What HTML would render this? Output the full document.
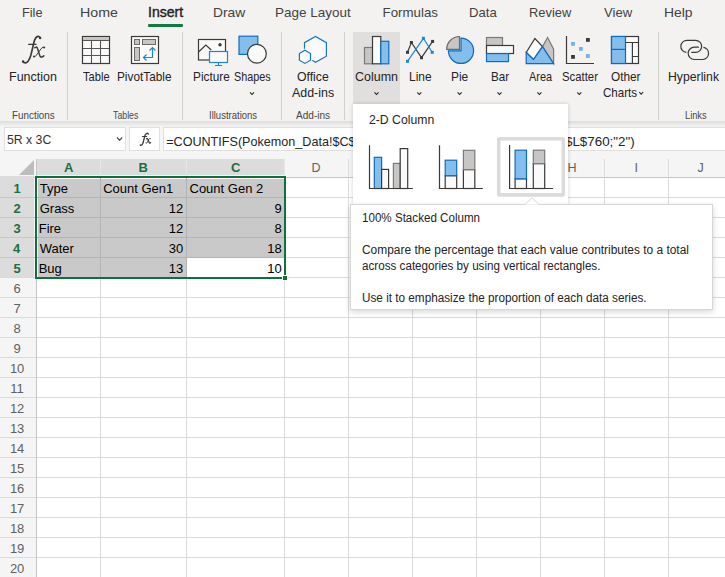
<!DOCTYPE html>
<html><head><meta charset="utf-8">
<style>
html,body{margin:0;padding:0;}
body{width:725px;height:577px;overflow:hidden;position:relative;background:#fff;font-family:"Liberation Sans",sans-serif;}
.a{position:absolute;}
.t{position:absolute;white-space:pre;transform-origin:0 0;}
svg{position:absolute;overflow:visible;}
</style></head><body>
<!-- ribbon background -->
<div class="a" style="left:0;top:0;width:725px;height:122px;background:#f3f2f1"></div>
<div class="a" style="left:148px;top:24px;width:35px;height:3px;background:#107c41;border-radius:1px"></div>
<div class="a" style="left:67px;top:32px;width:1px;height:88px;background:#d2d0ce"></div>
<div class="a" style="left:182px;top:32px;width:1px;height:88px;background:#d2d0ce"></div>
<div class="a" style="left:281px;top:32px;width:1px;height:88px;background:#d2d0ce"></div>
<div class="a" style="left:344px;top:32px;width:1px;height:88px;background:#d2d0ce"></div>
<div class="a" style="left:658px;top:32px;width:1px;height:88px;background:#d2d0ce"></div>
<div class="a" style="left:353px;top:32px;width:47px;height:72px;background:#e1dfdd"></div>
<!-- formula bar area -->
<div class="a" style="left:0;top:122px;width:725px;height:37px;background:#f5f5f5"></div>
<div class="a" style="left:0;top:121px;width:725px;height:6px;background:linear-gradient(#dddddd,#f5f5f5)"></div>
<div class="a" style="left:4px;top:127px;width:120px;height:22px;background:#fff;border:1px solid #e1dfdd"></div>
<div class="a" style="left:129px;top:127px;width:29px;height:22px;background:#fff;border:1px solid #e1dfdd"></div>
<div class="a" style="left:163px;top:127px;width:600px;height:22px;background:#fff;border:1px solid #e1dfdd"></div>
<div class="a" style="left:0px;top:151px;width:725px;height:26px;background:#f5f5f5;"></div>
<div class="a" style="left:36px;top:159px;width:248px;height:16px;background:#dcdcdc;"></div>
<div class="a" style="left:100px;top:159px;width:1px;height:18px;background:#e6e6e6;"></div>
<div class="a" style="left:186px;top:159px;width:1px;height:18px;background:#e6e6e6;"></div>
<div class="a" style="left:284px;top:159px;width:1px;height:18px;background:#e6e6e6;"></div>
<div class="a" style="left:348px;top:159px;width:1px;height:18px;background:#dcdcdc;"></div>
<div class="a" style="left:412px;top:159px;width:1px;height:18px;background:#dcdcdc;"></div>
<div class="a" style="left:476px;top:159px;width:1px;height:18px;background:#dcdcdc;"></div>
<div class="a" style="left:540px;top:159px;width:1px;height:18px;background:#dcdcdc;"></div>
<div class="a" style="left:604px;top:159px;width:1px;height:18px;background:#dcdcdc;"></div>
<div class="a" style="left:668px;top:159px;width:1px;height:18px;background:#dcdcdc;"></div>
<div class="a" style="left:0px;top:177px;width:725px;height:1px;background:#c6c6c6;"></div>
<div class="a" style="left:0px;top:178px;width:36px;height:399px;background:#f5f5f5;"></div>
<div class="a" style="left:0px;top:176px;width:34px;height:101px;background:#dcdcdc;"></div>
<div class="a" style="left:36px;top:159px;width:1px;height:418px;background:#c6c6c6;"></div>
<svg style="left:0;top:0" width="40" height="180"><polygon points="19,175 34,160 34,175" fill="#bdbdbd"/></svg>
<div class="a" style="left:37px;top:178px;width:247px;height:99px;background:#c9c9c9;"></div>
<div class="a" style="left:187px;top:258px;width:97px;height:19px;background:#ffffff;"></div>
<div class="a" style="left:37px;top:178px;width:247px;height:1px;background:#ffffff;"></div>
<div class="a" style="left:37px;top:178px;width:1px;height:99px;background:#ffffff;"></div>
<div class="a" style="left:0px;top:197px;width:36px;height:1px;background:#c8c8c8;"></div>
<div class="a" style="left:37px;top:197px;width:247px;height:1px;background:#b3b3b3;"></div>
<div class="a" style="left:284px;top:197px;width:441px;height:1px;background:#dadada;"></div>
<div class="a" style="left:0px;top:217px;width:36px;height:1px;background:#c8c8c8;"></div>
<div class="a" style="left:37px;top:217px;width:247px;height:1px;background:#b3b3b3;"></div>
<div class="a" style="left:284px;top:217px;width:441px;height:1px;background:#dadada;"></div>
<div class="a" style="left:0px;top:237px;width:36px;height:1px;background:#c8c8c8;"></div>
<div class="a" style="left:37px;top:237px;width:247px;height:1px;background:#b3b3b3;"></div>
<div class="a" style="left:284px;top:237px;width:441px;height:1px;background:#dadada;"></div>
<div class="a" style="left:0px;top:257px;width:36px;height:1px;background:#c8c8c8;"></div>
<div class="a" style="left:37px;top:257px;width:247px;height:1px;background:#b3b3b3;"></div>
<div class="a" style="left:284px;top:257px;width:441px;height:1px;background:#dadada;"></div>
<div class="a" style="left:0px;top:277px;width:36px;height:1px;background:#dadada;"></div>
<div class="a" style="left:37px;top:277px;width:688px;height:1px;background:#dadada;"></div>
<div class="a" style="left:0px;top:297px;width:36px;height:1px;background:#dadada;"></div>
<div class="a" style="left:37px;top:297px;width:688px;height:1px;background:#dadada;"></div>
<div class="a" style="left:0px;top:317px;width:36px;height:1px;background:#dadada;"></div>
<div class="a" style="left:37px;top:317px;width:688px;height:1px;background:#dadada;"></div>
<div class="a" style="left:0px;top:337px;width:36px;height:1px;background:#dadada;"></div>
<div class="a" style="left:37px;top:337px;width:688px;height:1px;background:#dadada;"></div>
<div class="a" style="left:0px;top:357px;width:36px;height:1px;background:#dadada;"></div>
<div class="a" style="left:37px;top:357px;width:688px;height:1px;background:#dadada;"></div>
<div class="a" style="left:0px;top:377px;width:36px;height:1px;background:#dadada;"></div>
<div class="a" style="left:37px;top:377px;width:688px;height:1px;background:#dadada;"></div>
<div class="a" style="left:0px;top:397px;width:36px;height:1px;background:#dadada;"></div>
<div class="a" style="left:37px;top:397px;width:688px;height:1px;background:#dadada;"></div>
<div class="a" style="left:0px;top:417px;width:36px;height:1px;background:#dadada;"></div>
<div class="a" style="left:37px;top:417px;width:688px;height:1px;background:#dadada;"></div>
<div class="a" style="left:0px;top:437px;width:36px;height:1px;background:#dadada;"></div>
<div class="a" style="left:37px;top:437px;width:688px;height:1px;background:#dadada;"></div>
<div class="a" style="left:0px;top:457px;width:36px;height:1px;background:#dadada;"></div>
<div class="a" style="left:37px;top:457px;width:688px;height:1px;background:#dadada;"></div>
<div class="a" style="left:0px;top:477px;width:36px;height:1px;background:#dadada;"></div>
<div class="a" style="left:37px;top:477px;width:688px;height:1px;background:#dadada;"></div>
<div class="a" style="left:0px;top:497px;width:36px;height:1px;background:#dadada;"></div>
<div class="a" style="left:37px;top:497px;width:688px;height:1px;background:#dadada;"></div>
<div class="a" style="left:0px;top:517px;width:36px;height:1px;background:#dadada;"></div>
<div class="a" style="left:37px;top:517px;width:688px;height:1px;background:#dadada;"></div>
<div class="a" style="left:0px;top:537px;width:36px;height:1px;background:#dadada;"></div>
<div class="a" style="left:37px;top:537px;width:688px;height:1px;background:#dadada;"></div>
<div class="a" style="left:0px;top:557px;width:36px;height:1px;background:#dadada;"></div>
<div class="a" style="left:37px;top:557px;width:688px;height:1px;background:#dadada;"></div>
<div class="a" style="left:100px;top:178px;width:1px;height:99px;background:#b3b3b3;"></div>
<div class="a" style="left:100px;top:278px;width:1px;height:299px;background:#dadada;"></div>
<div class="a" style="left:186px;top:178px;width:1px;height:99px;background:#b3b3b3;"></div>
<div class="a" style="left:186px;top:278px;width:1px;height:299px;background:#dadada;"></div>
<div class="a" style="left:284px;top:178px;width:1px;height:399px;background:#dadada;"></div>
<div class="a" style="left:348px;top:178px;width:1px;height:399px;background:#dadada;"></div>
<div class="a" style="left:412px;top:178px;width:1px;height:399px;background:#dadada;"></div>
<div class="a" style="left:476px;top:178px;width:1px;height:399px;background:#dadada;"></div>
<div class="a" style="left:540px;top:178px;width:1px;height:399px;background:#dadada;"></div>
<div class="a" style="left:604px;top:178px;width:1px;height:399px;background:#dadada;"></div>
<div class="a" style="left:668px;top:178px;width:1px;height:399px;background:#dadada;"></div>
<div class="a" style="left:35px;top:176px;width:251px;height:2px;background:#0f703b;"></div>
<div class="a" style="left:35px;top:176px;width:2px;height:103px;background:#0f703b;"></div>
<div class="a" style="left:284px;top:176px;width:2px;height:99px;background:#0f703b;"></div>
<div class="a" style="left:35px;top:277px;width:247px;height:2px;background:#0f703b;"></div>
<div class="a" style="left:283px;top:276px;width:4px;height:4px;background:#0f703b;"></div>
<div class="a" style="left:282px;top:275px;width:1px;height:5px;background:#fff;"></div>
<div class="a" style="left:283px;top:275px;width:4px;height:1px;background:#fff;"></div>
<div class="a" style="left:287px;top:275px;width:1px;height:6px;background:#fff;"></div>
<div class="a" style="left:282px;top:280px;width:6px;height:1px;background:#fff;"></div>
<svg style="left:0;top:0" width="725" height="122" viewBox="0 0 725 122">
<g fill="none" stroke-width="1.2" stroke-linejoin="miter">
<g id="fxg" stroke="#3b3a39" fill="none" stroke-linecap="round">
<path d="M40.2 38.2C40 36.8 39 36.2 38 36.3C36.2 36.5 34.8 38.8 34 42C33 46 31.8 52 30.6 56C29.3 60 27.5 62.8 25.2 62.9C24 62.9 23.2 62.3 23 61.8" stroke-width="1.7"/>
<circle cx="40.1" cy="38.1" r="1.25" fill="#3b3a39" stroke="none"/>
<circle cx="23.1" cy="61.6" r="1.25" fill="#3b3a39" stroke="none"/>
<path d="M28.6 44.4H36.1" stroke-width="1.1"/>
<path d="M34.8 47.8C35.5 47 36.5 46.8 37.2 47.8C38 49.5 39.2 54.5 40.2 56.5C40.8 57.5 42 57.3 43.8 55.8" stroke-width="1.5"/>
<path d="M44.6 47.4C43.5 46.8 42.5 47.2 41 48.8L36.2 55.5C35.5 56.5 34.5 57 33.8 56.6" stroke-width="1"/>
<circle cx="44.2" cy="47.6" r="1" fill="#3b3a39" stroke="none"/>
<circle cx="34" cy="56.6" r="1" fill="#3b3a39" stroke="none"/>
</g>
<!-- Table -->
<rect x="82.5" y="36.5" width="27" height="27" fill="#fafafa" stroke="#3b3a39"/>
<rect x="83" y="37" width="26" height="3.5" fill="#c8c6c4"/>
<path d="M83 40.5H109M83 48.5H109M83 55.5H109M91.5 40.5V63M100.5 40.5V63" stroke="#555" stroke-width="1.1"/>
<!-- PivotTable -->
<rect x="131.5" y="36.5" width="27" height="27" fill="#fafafa" stroke="#3b3a39"/>
<rect x="134.5" y="39.5" width="5" height="5" fill="#c8c6c4" stroke="#6b6b6b" stroke-width="1"/>
<rect x="142.5" y="39.5" width="13" height="5" fill="#c8c6c4" stroke="#6b6b6b" stroke-width="1"/>
<rect x="134.5" y="47.5" width="5" height="13" fill="#c8c6c4" stroke="#6b6b6b" stroke-width="1"/>
<path d="M143.5 57.5H152.5V47.5M149.5 50.5L152.5 47.5L155.5 50.5M146.5 54.5L143.5 57.5L146.5 60.5" stroke="#1a86d9"/>
<!-- Picture -->
<rect x="198.5" y="39.5" width="27" height="20.5" fill="#fafafa" stroke="#3b3a39"/>
<path d="M198.5 52L205.8 45L211.3 50" stroke="#3b3a39"/>
<circle cx="220" cy="44.8" r="1.7" fill="#3b3a39" stroke="none"/>
<rect x="209.5" y="51.5" width="18" height="11" fill="#fafafa" stroke="#1a86d9"/>
<path d="M218.5 62.5V65.3M215 65.5H222" stroke="#1a86d9"/>
<!-- Shapes -->
<rect x="239" y="36.2" width="18.8" height="18.2" fill="#83beec" stroke="#0f6cbd"/>
<circle cx="256.9" cy="53.7" r="9.4" fill="#fafafa" stroke="#3b3a39"/>
<!-- Office Add-ins -->
<path d="M304.5 48.7V42.7L315.5 36.5L326.4 42.7V56.2L315.5 62.2L312.3 60.3" fill="#fafafa" stroke="#1a73c8"/>
<path d="M304.9 50.3L310.5 53.6V60.2L304.9 63.4L299.4 60.2V53.6Z" fill="#fafafa" stroke="#1a73c8"/>
<!-- Column -->
<rect x="364.5" y="47.5" width="8" height="16.3" fill="#c8c6c4" stroke="#7a7a7a"/>
<rect x="372.5" y="36.5" width="8.3" height="27.3" fill="#fafafa" stroke="#3b3a39"/>
<rect x="380.8" y="41.3" width="8" height="22.5" fill="#83beec" stroke="#0f6cbd"/>
<!-- Line -->
<path d="M407.5 52.3L411.4 42.5L421.5 57.7L432.6 41.4" stroke="#3b3a39"/>
<path d="M407.5 61.3L423.4 38.3L432.2 52.3" stroke="#1a86d9"/>
<g stroke="none" fill="#3b3a39"><rect x="406" y="50.8" width="3" height="3"/><rect x="409.9" y="41" width="3" height="3"/><rect x="420" y="56.2" width="3" height="3"/><rect x="431.1" y="39.9" width="3" height="3"/></g>
<g stroke="none" fill="#1a86d9"><rect x="406" y="59.8" width="3" height="3"/><rect x="421.9" y="36.8" width="3" height="3"/><rect x="430.7" y="50.8" width="3" height="3"/></g>
<!-- Pie -->
<path d="M461 38.2A12.6 12.6 0 1 1 448.4 50.8H461Z" fill="#83beec" stroke="#0f6cbd"/>
<path d="M459.5 49.3H446.7A12.8 12.8 0 0 1 459.5 36.5Z" fill="#c8c6c4" stroke="#6b6b6b"/>
<!-- Bar -->
<rect x="486.5" y="37.5" width="16" height="8" fill="#c8c6c4" stroke="#7a7a7a"/>
<rect x="486.5" y="45.5" width="27" height="8" fill="#fafafa" stroke="#3b3a39"/>
<rect x="486.5" y="53.6" width="22" height="8" fill="#83beec" stroke="#0f6cbd"/>
<!-- Area -->
<path d="M542.5 46.6L547.6 37.5L553.6 49.1V63.6Z" fill="#c8c6c4" stroke="#7a7a7a"/>
<path d="M526.2 52.5L534.9 38.5L542.5 46.6L533.5 59.5Z" fill="#fafafa" stroke="#3b3a39"/>
<path d="M526.2 52.5L533.5 59.5L542.5 46.6L553.6 63.6H526.2Z" fill="#83beec" stroke="#0f6cbd"/>
<!-- Scatter -->
<path d="M566.5 36.1V63.5H594" stroke="#3b3a39"/>
<g stroke="none"><rect x="571.1" y="55" width="3.8" height="3.8" fill="#3b3a39"/><rect x="586" y="38" width="3.8" height="3.8" fill="#3b3a39"/>
<rect x="571.1" y="42" width="3.8" height="3.8" fill="#6fb3ec"/><rect x="579" y="47" width="3.8" height="3.8" fill="#6fb3ec"/><rect x="586" y="54.1" width="3.8" height="3.8" fill="#6fb3ec"/></g>
<!-- Other Charts -->
<rect x="611.5" y="36.5" width="27" height="27" fill="#fafafa" stroke="#3b3a39"/>
<rect x="611.5" y="36.5" width="14" height="27" fill="#83beec" stroke="#0f6cbd"/>
<path d="M611.5 49.4H625.5" stroke="#0f6cbd"/>
<path d="M625.7 42.5H638.5M632.4 42.5V63.5M632.4 56.5H638.5" stroke="#3b3a39"/>
<!-- Hyperlink -->
<path d="M686.4 52.3A5.95 5.95 0 0 1 687.2 40.4H695.7A5.95 5.95 0 0 1 695.7 52.3H691.3" stroke="#3b3a39"/>
<path d="M698.9 47.2H694.3A6.15 6.15 0 0 0 694.3 59.5H702.9A6.15 6.15 0 0 0 703.4 47.3" stroke="#3b3a39"/>
<!-- chevrons -->
<g stroke="#242424" stroke-width="1.1">
<path d="M250 92.3L252 94.5L254 92.3"/>
<path d="M374.5 92.3L376.5 94.5L378.5 92.3"/>
<path d="M417.3 92.3L419.3 94.5L421.3 92.3"/>
<path d="M457.6 92.3L459.6 94.5L461.6 92.3"/>
<path d="M497.5 92.3L499.5 94.5L501.5 92.3"/>
<path d="M537.4 92.3L539.4 94.5L541.4 92.3"/>
<path d="M577.3 92.3L579.3 94.5L581.3 92.3"/>
<path d="M639.2 92L641.2 94.2L643.2 92"/>
</g>
</g>
</svg>
<svg style="left:0;top:0" width="200" height="160">
<g stroke="#3b3a39" fill="none" stroke-linecap="round">
<path d="M148.3 134.2C148.1 133.4 147.5 133.2 146.9 133.3C145.9 133.5 145.2 134.6 144.8 136C144.2 138.5 143.6 141.2 142.9 143.2C142.3 144.8 141.6 145.4 140.9 145.4C140.5 145.4 140.2 145.1 140.2 144.8" stroke-width="1.3"/>
<path d="M142.5 136.5H146.7" stroke-width="1"/>
<path d="M146.4 138.8C147 138.3 147.6 138.5 148 139.5L149.2 142.5C149.5 143.3 150.2 143.2 150.7 142.6" stroke-width="1.2"/>
<path d="M150.6 138.6C150 138.2 149.4 138.5 148.8 139.3L147.2 142.5C146.8 143.3 146.2 143.4 145.9 143.1" stroke-width="0.9"/>
</g>
<path d="M117 137.5L119.6 140.2L122.2 137.5" fill="none" stroke="#424242" stroke-width="1.1"/>
</svg>

<span class="t" style="left:21.54px;top:5.84px;font:normal 400 13.3px/13.3px 'Liberation Sans', sans-serif;color:#424242;transform:scaleX(0.9585);">File</span>
<span class="t" style="left:80.03px;top:5.84px;font:normal 400 13.3px/13.3px 'Liberation Sans', sans-serif;color:#424242;transform:scaleX(1.0683);">Home</span>
<span class="t" style="left:147.59px;top:5.05px;font:normal 400 14px/14px 'Liberation Sans', sans-serif;color:#242424;transform:scaleX(1.0052);-webkit-text-stroke:0.4px #242424;">Insert</span>
<span class="t" style="left:213.26px;top:5.84px;font:normal 400 13.3px/13.3px 'Liberation Sans', sans-serif;color:#424242;transform:scaleX(1.0386);">Draw</span>
<span class="t" style="left:275.39px;top:5.84px;font:normal 400 13.3px/13.3px 'Liberation Sans', sans-serif;color:#424242;transform:scaleX(1.0138);">Page Layout</span>
<span class="t" style="left:382.60px;top:5.84px;font:normal 400 13.3px/13.3px 'Liberation Sans', sans-serif;color:#424242;">Formulas</span>
<span class="t" style="left:468.91px;top:5.84px;font:normal 400 13.3px/13.3px 'Liberation Sans', sans-serif;color:#424242;transform:scaleX(0.9895);">Data</span>
<span class="t" style="left:529.23px;top:5.84px;font:normal 400 13.3px/13.3px 'Liberation Sans', sans-serif;color:#424242;transform:scaleX(0.9675);">Review</span>
<span class="t" style="left:604.40px;top:5.84px;font:normal 400 13.3px/13.3px 'Liberation Sans', sans-serif;color:#424242;transform:scaleX(0.9835);">View</span>
<span class="t" style="left:664.36px;top:5.84px;font:normal 400 13.3px/13.3px 'Liberation Sans', sans-serif;color:#424242;transform:scaleX(1.0442);">Help</span>
<span class="t" style="left:9.37px;top:71.17px;font:normal 400 12.2px/12.2px 'Liberation Sans', sans-serif;color:#242424;transform:scaleX(1.0274);">Function</span>
<span class="t" style="left:83.10px;top:71.17px;font:normal 400 12.2px/12.2px 'Liberation Sans', sans-serif;color:#242424;transform:scaleX(0.9129);">Table</span>
<span class="t" style="left:117.03px;top:71.17px;font:normal 400 12.2px/12.2px 'Liberation Sans', sans-serif;color:#242424;transform:scaleX(0.9684);">PivotTable</span>
<span class="t" style="left:192.63px;top:71.17px;font:normal 400 12.2px/12.2px 'Liberation Sans', sans-serif;color:#242424;transform:scaleX(0.9690);">Picture</span>
<span class="t" style="left:234.00px;top:71.17px;font:normal 400 12.2px/12.2px 'Liberation Sans', sans-serif;color:#242424;transform:scaleX(0.8875);">Shapes</span>
<span class="t" style="left:297.00px;top:71.17px;font:normal 400 12.2px/12.2px 'Liberation Sans', sans-serif;color:#242424;transform:scaleX(1.0052);">Office</span>
<span class="t" style="left:292.00px;top:87.17px;font:normal 400 12.2px/12.2px 'Liberation Sans', sans-serif;color:#242424;transform:scaleX(1.0187);">Add-ins</span>
<span class="t" style="left:355.40px;top:71.17px;font:normal 400 12.2px/12.2px 'Liberation Sans', sans-serif;color:#242424;transform:scaleX(1.0238);">Column</span>
<span class="t" style="left:408.52px;top:71.17px;font:normal 400 12.2px/12.2px 'Liberation Sans', sans-serif;color:#242424;transform:scaleX(0.9792);">Line</span>
<span class="t" style="left:451.02px;top:71.17px;font:normal 400 12.2px/12.2px 'Liberation Sans', sans-serif;color:#242424;transform:scaleX(0.9800);">Pie</span>
<span class="t" style="left:490.95px;top:71.17px;font:normal 400 12.2px/12.2px 'Liberation Sans', sans-serif;color:#242424;transform:scaleX(0.9549);">Bar</span>
<span class="t" style="left:528.50px;top:71.17px;font:normal 400 12.2px/12.2px 'Liberation Sans', sans-serif;color:#242424;transform:scaleX(0.8935);">Area</span>
<span class="t" style="left:561.80px;top:71.17px;font:normal 400 12.2px/12.2px 'Liberation Sans', sans-serif;color:#242424;transform:scaleX(0.9312);">Scatter</span>
<span class="t" style="left:610.50px;top:71.17px;font:normal 400 12.2px/12.2px 'Liberation Sans', sans-serif;color:#242424;transform:scaleX(0.9697);">Other</span>
<span class="t" style="left:602.60px;top:87.17px;font:normal 400 12.2px/12.2px 'Liberation Sans', sans-serif;color:#242424;transform:scaleX(0.9469);">Charts</span>
<span class="t" style="left:668.30px;top:71.17px;font:normal 400 12.2px/12.2px 'Liberation Sans', sans-serif;color:#242424;transform:scaleX(1.0039);">Hyperlink</span>
<span class="t" style="left:12.40px;top:110.87px;font:normal 400 10.2px/10.2px 'Liberation Sans', sans-serif;color:#484644;transform:scaleX(0.9666);">Functions</span>
<span class="t" style="left:112.70px;top:110.87px;font:normal 400 10.2px/10.2px 'Liberation Sans', sans-serif;color:#484644;transform:scaleX(0.8619);">Tables</span>
<span class="t" style="left:209.00px;top:110.87px;font:normal 400 10.2px/10.2px 'Liberation Sans', sans-serif;color:#484644;transform:scaleX(0.9333);">Illustrations</span>
<span class="t" style="left:296.00px;top:110.87px;font:normal 400 10.2px/10.2px 'Liberation Sans', sans-serif;color:#484644;transform:scaleX(0.9870);">Add-ins</span>
<span class="t" style="left:684.50px;top:110.87px;font:normal 400 10.2px/10.2px 'Liberation Sans', sans-serif;color:#484644;transform:scaleX(0.9076);">Links</span>
<span class="t" style="left:7.20px;top:133.20px;font:normal 400 13px/13px 'Liberation Sans', sans-serif;color:#323130;transform:scaleX(0.9426);">5R x 3C</span>
<span class="t" style="left:166.20px;top:135.93px;font:normal 400 12.6px/12.6px 'Liberation Sans', sans-serif;color:#242424;">=COUNTIFS(Pokemon_Data!$C$</span>
<span class="t" style="left:565.00px;top:135.93px;font:normal 400 12.6px/12.6px 'Liberation Sans', sans-serif;color:#242424;transform:scaleX(1.0616);">$L$760;"2")</span>
<span class="t" style="left:39.70px;top:181.90px;font:normal 400 13px/13px 'Liberation Sans', sans-serif;color:#000000;">Type</span>
<span class="t" style="left:103.20px;top:181.90px;font:normal 400 13px/13px 'Liberation Sans', sans-serif;color:#000000;">Count Gen1</span>
<span class="t" style="left:189.50px;top:181.90px;font:normal 400 13px/13px 'Liberation Sans', sans-serif;color:#000000;">Count Gen 2</span>
<span class="t" style="left:39.70px;top:201.90px;font:normal 400 13px/13px 'Liberation Sans', sans-serif;color:#000000;">Grass</span>
<span class="t" style="left:168.67px;top:201.90px;font:normal 400 13px/13px 'Liberation Sans', sans-serif;color:#000000;">12</span>
<span class="t" style="left:274.60px;top:201.90px;font:normal 400 13px/13px 'Liberation Sans', sans-serif;color:#000000;">9</span>
<span class="t" style="left:38.70px;top:221.90px;font:normal 400 13px/13px 'Liberation Sans', sans-serif;color:#000000;">Fire</span>
<span class="t" style="left:168.67px;top:221.90px;font:normal 400 13px/13px 'Liberation Sans', sans-serif;color:#000000;">12</span>
<span class="t" style="left:274.60px;top:221.90px;font:normal 400 13px/13px 'Liberation Sans', sans-serif;color:#000000;">8</span>
<span class="t" style="left:39.70px;top:241.90px;font:normal 400 13px/13px 'Liberation Sans', sans-serif;color:#000000;">Water</span>
<span class="t" style="left:168.67px;top:241.90px;font:normal 400 13px/13px 'Liberation Sans', sans-serif;color:#000000;">30</span>
<span class="t" style="left:267.37px;top:241.90px;font:normal 400 13px/13px 'Liberation Sans', sans-serif;color:#000000;">18</span>
<span class="t" style="left:38.70px;top:261.90px;font:normal 400 13px/13px 'Liberation Sans', sans-serif;color:#000000;">Bug</span>
<span class="t" style="left:168.67px;top:261.90px;font:normal 400 13px/13px 'Liberation Sans', sans-serif;color:#000000;">13</span>
<span class="t" style="left:267.37px;top:261.90px;font:normal 400 13px/13px 'Liberation Sans', sans-serif;color:#000000;">10</span>
<span class="t" style="left:64.00px;top:161.00px;font:normal 700 13px/13px 'Liberation Sans', sans-serif;color:#1e6e42;">A</span>
<span class="t" style="left:138.50px;top:161.00px;font:normal 700 13px/13px 'Liberation Sans', sans-serif;color:#1e6e42;">B</span>
<span class="t" style="left:231.00px;top:161.00px;font:normal 700 13px/13px 'Liberation Sans', sans-serif;color:#1e6e42;">C</span>
<span class="t" style="left:311.50px;top:162.22px;font:normal 400 12.5px/12.5px 'Liberation Sans', sans-serif;color:#616161;">D</span>
<span class="t" style="left:376.00px;top:162.22px;font:normal 400 12.5px/12.5px 'Liberation Sans', sans-serif;color:#616161;">E</span>
<span class="t" style="left:440.00px;top:162.22px;font:normal 400 12.5px/12.5px 'Liberation Sans', sans-serif;color:#616161;">F</span>
<span class="t" style="left:504.00px;top:162.22px;font:normal 400 12.5px/12.5px 'Liberation Sans', sans-serif;color:#616161;">G</span>
<span class="t" style="left:567.50px;top:162.22px;font:normal 400 12.5px/12.5px 'Liberation Sans', sans-serif;color:#616161;">H</span>
<span class="t" style="left:634.50px;top:162.22px;font:normal 400 12.5px/12.5px 'Liberation Sans', sans-serif;color:#616161;">I</span>
<span class="t" style="left:697.50px;top:162.22px;font:normal 400 12.5px/12.5px 'Liberation Sans', sans-serif;color:#616161;">J</span>
<span class="t" style="left:13.50px;top:181.90px;font:normal 700 13px/13px 'Liberation Sans', sans-serif;color:#1e6e42;">1</span>
<span class="t" style="left:13.50px;top:201.90px;font:normal 700 13px/13px 'Liberation Sans', sans-serif;color:#1e6e42;">2</span>
<span class="t" style="left:13.50px;top:221.90px;font:normal 700 13px/13px 'Liberation Sans', sans-serif;color:#1e6e42;">3</span>
<span class="t" style="left:13.00px;top:241.90px;font:normal 700 13px/13px 'Liberation Sans', sans-serif;color:#1e6e42;">4</span>
<span class="t" style="left:13.50px;top:261.90px;font:normal 700 13px/13px 'Liberation Sans', sans-serif;color:#1e6e42;">5</span>
<span class="t" style="left:13.50px;top:281.90px;font:normal 400 13px/13px 'Liberation Sans', sans-serif;color:#616161;">6</span>
<span class="t" style="left:13.50px;top:301.90px;font:normal 400 13px/13px 'Liberation Sans', sans-serif;color:#616161;">7</span>
<span class="t" style="left:13.50px;top:321.90px;font:normal 400 13px/13px 'Liberation Sans', sans-serif;color:#616161;">8</span>
<span class="t" style="left:13.50px;top:341.90px;font:normal 400 13px/13px 'Liberation Sans', sans-serif;color:#616161;">9</span>
<span class="t" style="left:9.89px;top:361.90px;font:normal 400 13px/13px 'Liberation Sans', sans-serif;color:#616161;">10</span>
<span class="t" style="left:10.37px;top:381.90px;font:normal 400 13px/13px 'Liberation Sans', sans-serif;color:#616161;">11</span>
<span class="t" style="left:9.89px;top:401.90px;font:normal 400 13px/13px 'Liberation Sans', sans-serif;color:#616161;">12</span>
<span class="t" style="left:9.89px;top:421.90px;font:normal 400 13px/13px 'Liberation Sans', sans-serif;color:#616161;">13</span>
<span class="t" style="left:9.89px;top:441.90px;font:normal 400 13px/13px 'Liberation Sans', sans-serif;color:#616161;">14</span>
<span class="t" style="left:9.89px;top:461.90px;font:normal 400 13px/13px 'Liberation Sans', sans-serif;color:#616161;">15</span>
<span class="t" style="left:9.89px;top:481.90px;font:normal 400 13px/13px 'Liberation Sans', sans-serif;color:#616161;">16</span>
<span class="t" style="left:9.89px;top:501.90px;font:normal 400 13px/13px 'Liberation Sans', sans-serif;color:#616161;">17</span>
<span class="t" style="left:9.89px;top:521.90px;font:normal 400 13px/13px 'Liberation Sans', sans-serif;color:#616161;">18</span>
<span class="t" style="left:9.89px;top:541.90px;font:normal 400 13px/13px 'Liberation Sans', sans-serif;color:#616161;">19</span>
<span class="t" style="left:9.89px;top:561.90px;font:normal 400 13px/13px 'Liberation Sans', sans-serif;color:#616161;">20</span>
<!-- dropdown panel -->
<div class="a" style="left:353px;top:104px;width:215px;height:101px;background:#fff;box-shadow:0 0 4px rgba(0,0,0,0.18)"></div>
<svg style="left:0;top:0" width="725" height="577">
<g fill="none" stroke-width="1.2">
<!-- icon 1 clustered -->
<rect x="374.3" y="157.3" width="7.3" height="31.2" fill="#83beec" stroke="#0f6cbd"/>
<rect x="381.6" y="169.4" width="7" height="19.1" fill="#fafafa" stroke="#3b3a39"/>
<rect x="393.4" y="163.4" width="6.8" height="25.1" fill="#c8c6c4" stroke="#7a7a7a"/>
<rect x="400.2" y="148.6" width="7.5" height="39.9" fill="#fafafa" stroke="#3b3a39"/>
<path d="M369.5 145.2V188.5H412.8" stroke="#3b3a39"/>
<!-- icon 2 stacked -->
<rect x="445.2" y="175.7" width="11.5" height="12.8" fill="#fafafa" stroke="#3b3a39"/>
<rect x="445.2" y="160.2" width="11.5" height="15.5" fill="#83beec" stroke="#0f6cbd"/>
<rect x="463.4" y="169.6" width="11.4" height="18.9" fill="#fafafa" stroke="#3b3a39"/>
<rect x="463.4" y="150.3" width="11.4" height="19.3" fill="#c8c6c4" stroke="#7a7a7a"/>
<path d="M439.5 145.2V188.5H482.8" stroke="#3b3a39"/>
<!-- icon 3 100% stacked (selected) -->
<rect x="498.7" y="138.7" width="64.6" height="56.2" rx="1" fill="#fff" stroke="#dcdbda" stroke-width="3.6"/>
<rect x="515.1" y="178.8" width="11.4" height="9.7" fill="#fafafa" stroke="#3b3a39"/>
<rect x="515.1" y="150.2" width="11.4" height="28.6" fill="#83beec" stroke="#0f6cbd"/>
<rect x="533.3" y="163.6" width="11.4" height="24.9" fill="#fafafa" stroke="#3b3a39"/>
<rect x="533.3" y="150.2" width="11.4" height="13.4" fill="#c8c6c4" stroke="#7a7a7a"/>
<path d="M509.6 145V188.5H553.1" stroke="#3b3a39"/>
</g>
</svg>

<span class="t" style="left:368.60px;top:113.76px;font:normal 400 12.8px/12.8px 'Liberation Sans', sans-serif;color:#242424;transform:scaleX(0.9552);">2-D Column</span>
<!-- tooltip -->
<div class="a" style="left:350px;top:204px;width:361px;height:104px;background:#fff;border:1px solid #d6d6d6;box-shadow:0 2px 6px rgba(0,0,0,0.16)"></div>
<svg style="left:0;top:0" width="725" height="577"><path d="M524.5 205.2L532 197.8L539.5 205.2Z" fill="#fff" stroke="#d6d6d6" stroke-width="1"/><rect x="523" y="205" width="18" height="2" fill="#fff"/></svg>
<span class="t" style="left:362.20px;top:211.74px;font:normal 400 12px/12px 'Liberation Sans', sans-serif;color:#242424;transform:scaleX(0.9671);">100% Stacked Column</span>
<span class="t" style="left:362.20px;top:244.04px;font:normal 400 12px/12px 'Liberation Sans', sans-serif;color:#242424;transform:scaleX(0.9942);">Compare the percentage that each value contributes to a total</span>
<span class="t" style="left:362.20px;top:259.84px;font:normal 400 12px/12px 'Liberation Sans', sans-serif;color:#242424;transform:scaleX(0.9714);">across categories by using vertical rectangles.</span>
<span class="t" style="left:362.20px;top:292.14px;font:normal 400 12px/12px 'Liberation Sans', sans-serif;color:#242424;transform:scaleX(0.9787);">Use it to emphasize the proportion of each data series.</span>
</body></html>
